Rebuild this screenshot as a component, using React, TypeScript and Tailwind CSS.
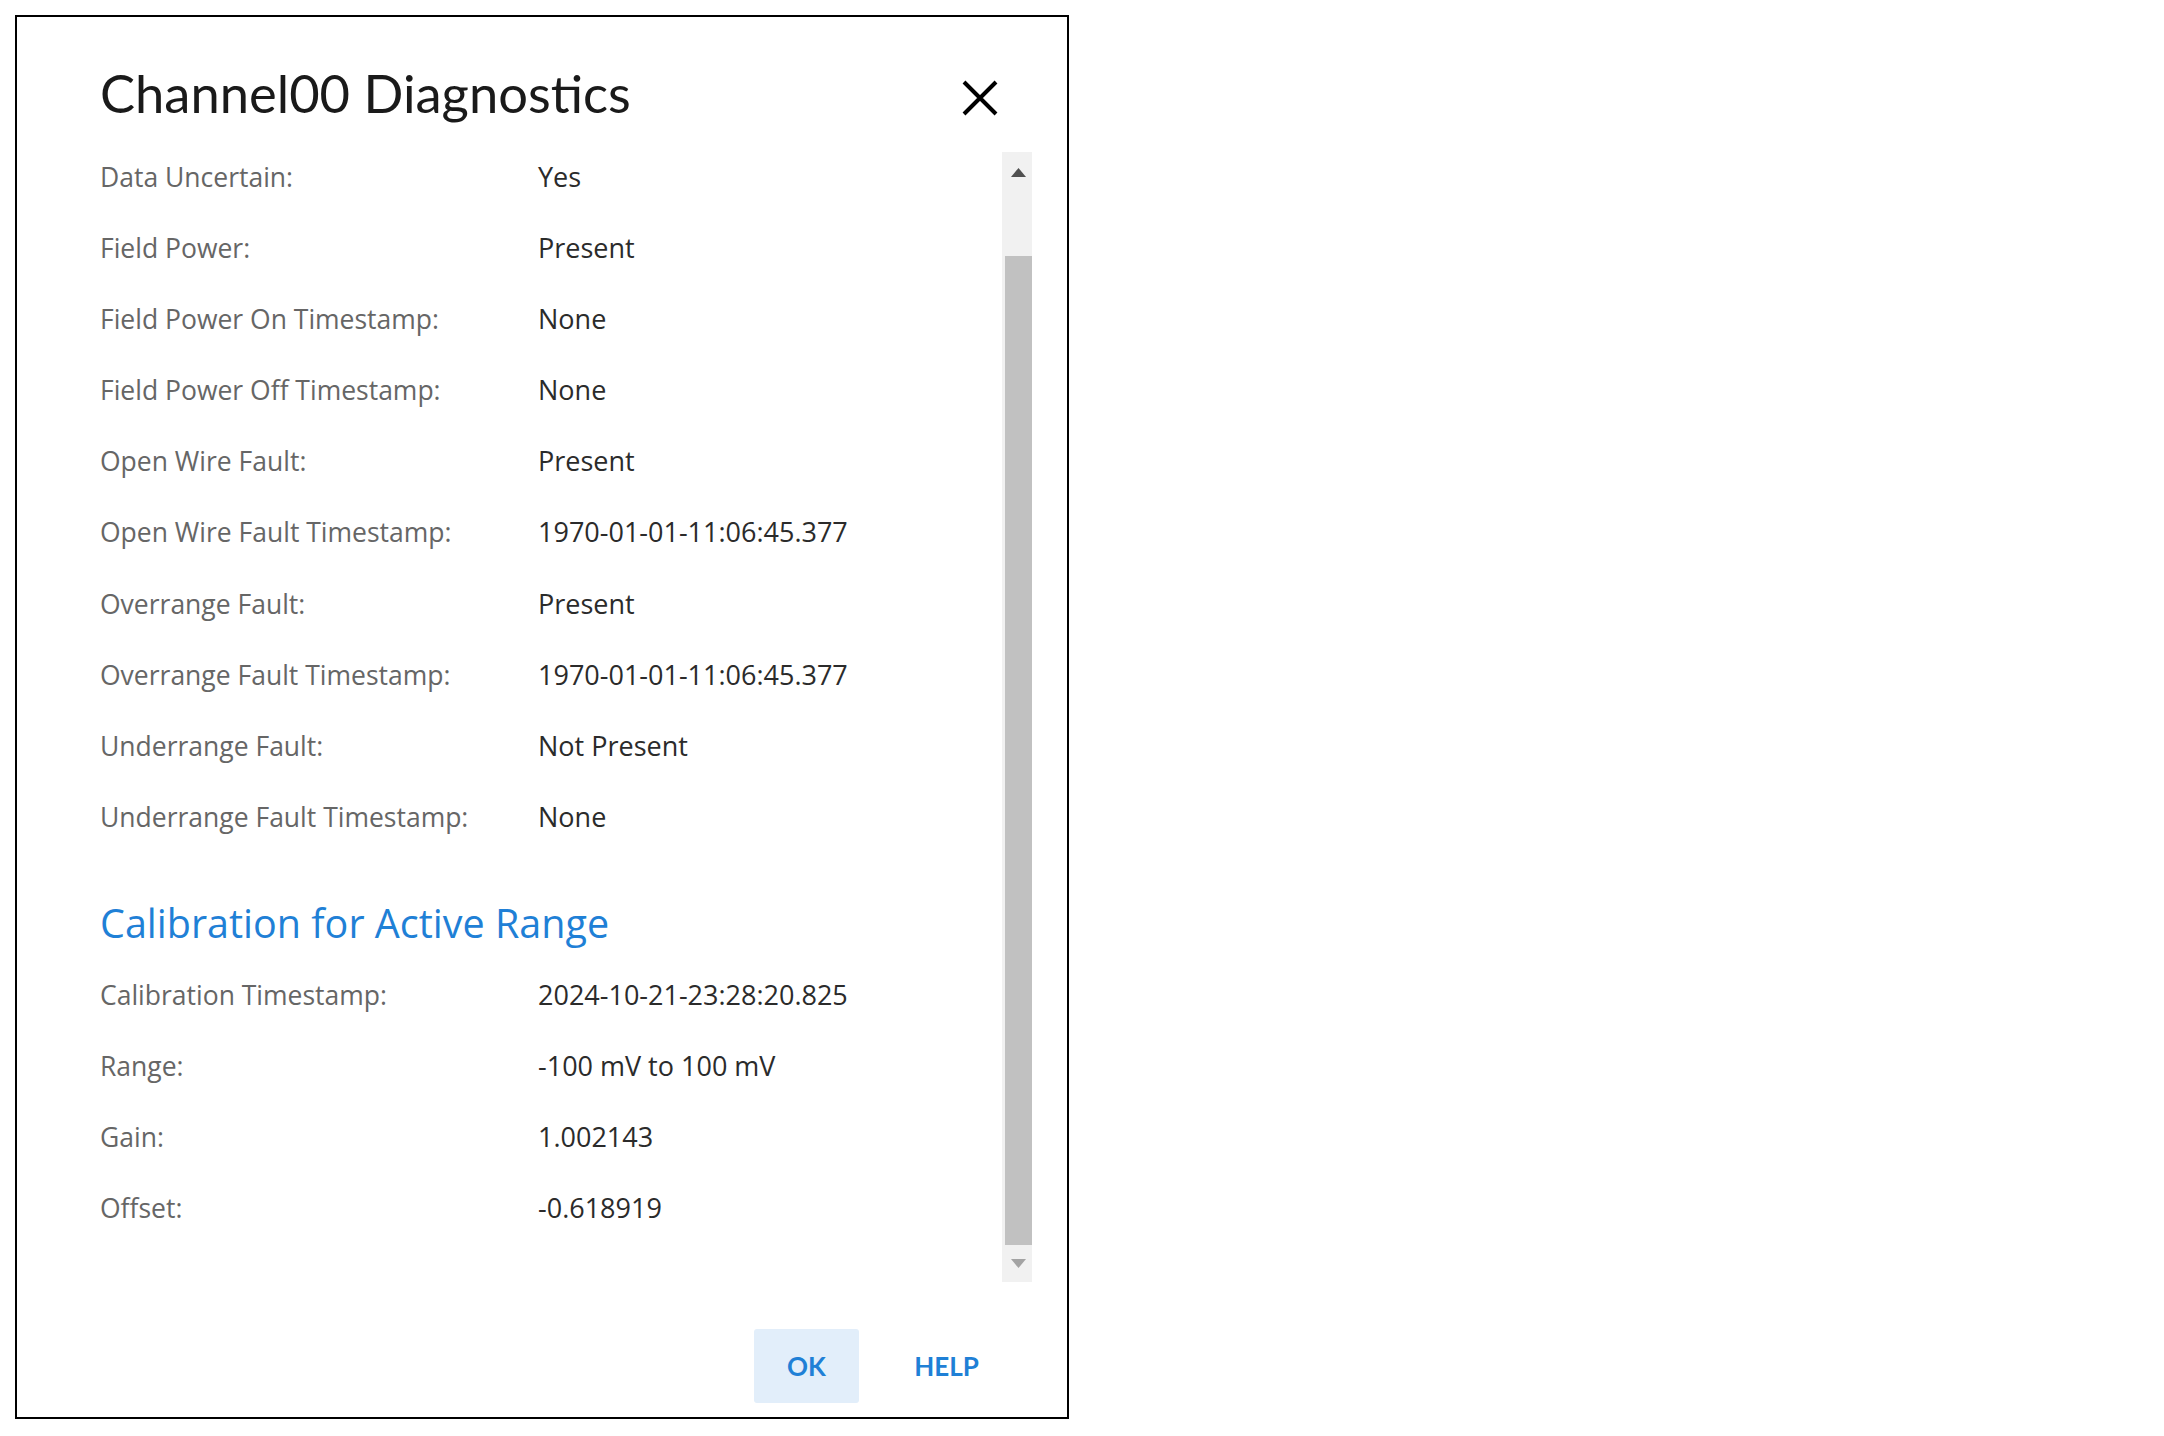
import React from 'react'

const titleFont = { fontFamily: 'Lato, "Open Sans", "Liberation Sans", sans-serif' }
const bodyFont = { fontFamily: '"Open Sans", "Noto Sans", "Liberation Sans", sans-serif' }

const diagnostics: [string, string][] = [
  ['Data Uncertain:', 'Yes'],
  ['Field Power:', 'Present'],
  ['Field Power On Timestamp:', 'None'],
  ['Field Power Off Timestamp:', 'None'],
  ['Open Wire Fault:', 'Present'],
  ['Open Wire Fault Timestamp:', '1970-01-01-11:06:45.377'],
  ['Overrange Fault:', 'Present'],
  ['Overrange Fault Timestamp:', '1970-01-01-11:06:45.377'],
  ['Underrange Fault:', 'Not Present'],
  ['Underrange Fault Timestamp:', 'None'],
]

const calibration: [string, string][] = [
  ['Calibration Timestamp:', '2024-10-21-23:28:20.825'],
  ['Range:', '-100 mV to 100 mV'],
  ['Gain:', '1.002143'],
  ['Offset:', '-0.618919'],
]

function InfoRows({ rows }: { rows: [string, string][] }) {
  return (
    <div className="flex flex-col gap-[35.1px]" style={bodyFont}>
      {rows.map(([label, value]) => (
        <div key={label} className="flex leading-[36px]">
          <div className="w-[438px] shrink-0 text-[26.5px] text-[#666666]">{label}</div>
          <div className="text-[27px] text-[#2b2b2b]">{value}</div>
        </div>
      ))}
    </div>
  )
}

function Scrollbar() {
  return (
    <div className="w-[30px] h-full bg-[#f1f1f1] flex flex-col">
      <div className="h-[104px] flex items-start justify-center pt-[16px] pl-[3px]">
        <svg width="15" height="9" viewBox="0 0 15 9">
          <path d="M7.5 0 L15 9 L0 9 Z" fill="#505050" />
        </svg>
      </div>
      <div className="flex-1 ml-[3px] bg-[#c1c1c1]" />
      <div className="h-[37px] flex items-start justify-center pt-[14px] pl-[3px]">
        <svg width="15" height="9" viewBox="0 0 15 9">
          <path d="M0 0 L15 0 L7.5 9 Z" fill="#a3a3a3" />
        </svg>
      </div>
    </div>
  )
}

export default function App() {
  return (
    <div className="min-h-screen bg-white pt-[15px] pl-[15px]" style={titleFont}>
      <div className="w-[1054px] h-[1404px] border-2 border-black bg-white flex flex-col">
        <div className="h-[135px] shrink-0 flex items-start justify-between pt-[46px] pl-[83px] pr-[69px]">
          <h1 className="text-[52.5px] leading-[60px] font-normal text-[#1a1a1a]">Channel00 Diagnostics</h1>
          <button type="button" className="mt-[17px] w-[36px] h-[36px]">
            <svg width="36" height="36" viewBox="0 0 36 36">
              <path d="M2 2 L34 34 M34 2 L2 34" stroke="#000" strokeWidth="4" fill="none" />
            </svg>
          </button>
        </div>

        <div className="h-[1130px] shrink-0 flex pr-[35px]">
          <div className="flex-1 pl-[83px] pt-[7px]">
            <InfoRows rows={diagnostics} />
            <h2 className="mt-[64px] text-[39.5px] leading-[48px] font-normal text-[#1f80d6]" style={bodyFont}>
              Calibration for Active Range
            </h2>
            <div className="mt-[30px]">
              <InfoRows rows={calibration} />
            </div>
          </div>
          <Scrollbar />
        </div>

        <div className="flex-1 flex justify-end items-start pt-[47px] pr-[68px] gap-[35px]">
          <button type="button" className="w-[105px] h-[74px] rounded-[3px] bg-[#e2eefa] text-[26px] font-bold text-[#1f80d6]">
            OK
          </button>
          <button type="button" className="w-[105px] h-[74px] rounded-[3px] text-[26px] font-bold text-[#1f80d6]">
            HELP
          </button>
        </div>
      </div>
    </div>
  )
}
